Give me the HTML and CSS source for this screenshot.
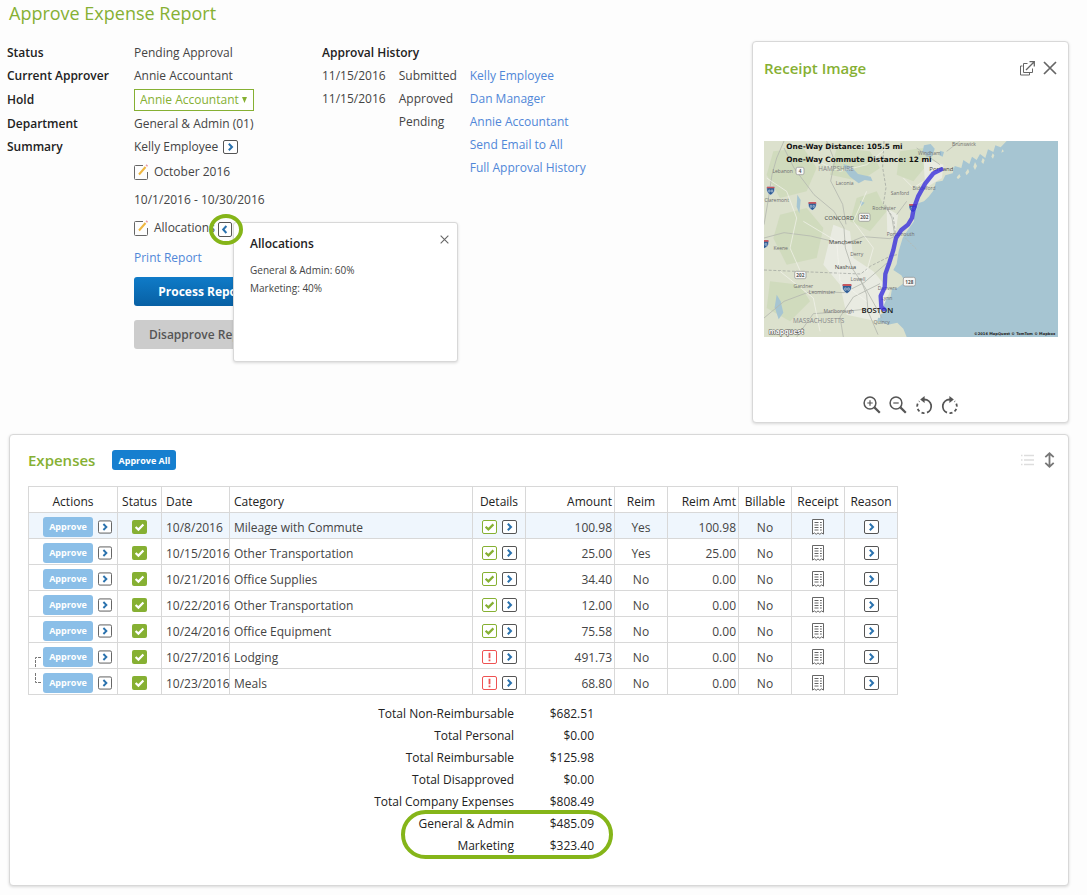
FILE: index.html
```
<!DOCTYPE html>
<html lang="en">
<head>
    <meta charset="UTF-8">
    <meta name="viewport" content="width=device-width, initial-scale=1.0">
    <title>Approve Expense Report</title>
    <link rel="stylesheet" href="styles.css">
</head>
<body>

    <!-- shared icons -->
    <svg class="sprite" width="0" height="0" aria-hidden="true">
        <symbol id="i-next" viewBox="0 0 15 14">
            <rect x="0.5" y="0.5" width="14" height="13" rx="1.5" fill="#fff" stroke="#555"/>
            <path d="M5.8 3.8L9 7l-3.2 3.2" fill="none" stroke="#2a72ae" stroke-width="2"/>
        </symbol>
        <symbol id="i-prev" viewBox="0 0 14 15">
            <rect x="0.5" y="0.5" width="13" height="14" rx="1.5" fill="#fff" stroke="#555"/>
            <path d="M8.4 4L5.2 7.5 8.4 11" fill="none" stroke="#2a72ae" stroke-width="2"/>
        </symbol>
        <symbol id="i-edit" viewBox="0 0 15 16">
            <path d="M9 1.5H1.5a1 1 0 0 0-1 1v12a1 1 0 0 0 1 1h11a1 1 0 0 0 1-1V8" fill="none" stroke="#666"/>
            <path d="M5 10.5L11.5 3" stroke="#eeb640" stroke-width="2"/>
            <path d="M12.3 2.2l1-1.2" stroke="#e79aa4" stroke-width="2"/>
        </symbol>
        <symbol id="i-ok" viewBox="0 0 15 14">
            <rect width="15" height="14" rx="2" fill="#86b033"/>
            <path d="M3.6 7l2.8 2.6 5-5.2" fill="none" stroke="#fff" stroke-width="2.2"/>
        </symbol>
        <symbol id="i-check" viewBox="0 0 15 14">
            <rect x="0.5" y="0.5" width="14" height="13" rx="1.5" fill="#fff" stroke="#86b033"/>
            <path d="M3.6 6.8l2.8 2.6 5-5" fill="none" stroke="#86b033" stroke-width="2.2"/>
        </symbol>
        <symbol id="i-warn" viewBox="0 0 15 14">
            <rect x="0.5" y="0.5" width="14" height="13" rx="1.5" fill="#fff" stroke="#ee5252"/>
            <path d="M7.5 2.8v5.4M7.5 9.4v1.8" stroke="#ee5252" stroke-width="1.8"/>
        </symbol>
        <symbol id="i-receipt" viewBox="0 0 12 16">
            <path d="M0.5 0.5h11v14.6l-1.9-1.2-1.8 1.4L6 13.9l-1.8 1.4-1.8-1.4-1.9 1.2z" fill="#fff" stroke="#666"/>
            <path d="M2.5 3.5h4M8 3.5h1.8M2.5 6h4M8 6h1.8M2.5 8.5h4M8 8.5h1.8M2.5 11h4M8 11h1.8" stroke="#666"/>
        </symbol>
        <symbol id="i-close" viewBox="0 0 14 14">
            <path d="M1 1l12 12M13 1L1 13" fill="none" stroke="#666" stroke-width="1.7"/>
        </symbol>
        <symbol id="i-shield" viewBox="0 0 28 28">
            <path d="M3 2h22c2 10 1 18-11 25C2 20 1 12 3 2z" fill="#2f5d95" stroke="#e8eef2" stroke-width="1.5"/>
            <path d="M3 2h22l1 5H2z" fill="#c8585e"/>
            <path d="M8 12h4v6H8zM16 12h4v6h-4z" fill="none" stroke="#dfe8f0" stroke-width="1.5"/>
        </symbol>
    </svg>

    <main class="page">
        <h1>Approve Expense Report</h1>

        <section class="top">
            <dl class="summary">
                <dt>Status</dt>
                <dd>Pending Approval</dd>
                <dt>Current Approver</dt>
                <dd>Annie Accountant</dd>
                <dt class="hold"><label for="hold">Hold</label></dt>
                <dd class="hold">
                    <span class="select">
                        <select id="hold">
                            <option>Annie Accountant</option>
                        </select>
                        <svg width="5" height="6" viewBox="0 0 5 6"><path d="M0 0h5L2.5 6z" fill="#86b033"/></svg>
                    </span>
                </dd>
                <dt>Department</dt>
                <dd>General &amp; Admin (01)</dd>
                <dt>Summary</dt>
                <dd>Kelly Employee <button class="icon" aria-label="Employee details"><svg width="15" height="14"><use href="#i-next"/></svg></button></dd>
                <dd class="tall"><button class="icon" aria-label="Edit name"><svg width="15" height="16"><use href="#i-edit"/></svg></button>October 2016</dd>
                <dd class="tall">10/1/2016 - 10/30/2016</dd>
                <dd class="tall allocations">
                    <button class="icon" aria-label="Edit allocations"><svg width="15" height="16"><use href="#i-edit"/></svg></button>Allocations
                    <button class="icon ringed" aria-label="Hide allocations"><svg width="14" height="15"><use href="#i-prev"/></svg></button>
                    <div class="popover">
                        <h3>Allocations</h3>
                        <button class="icon" aria-label="Close allocations"><svg width="9" height="9"><use href="#i-close"/></svg></button>
                        <p>General &amp; Admin: 60%</p>
                        <p>Marketing: 40%</p>
                    </div>
                </dd>
                <dd class="print"><a href="#">Print Report</a></dd>
                <dd class="buttons">
                    <button class="btn process">Process Report</button>
                    <button class="btn disapprove">Disapprove Report</button>
                </dd>
            </dl>

            <table class="history">
                <caption>Approval History</caption>
                <tr><td>11/15/2016</td><td>Submitted</td><td><a href="#">Kelly Employee</a></td></tr>
                <tr><td>11/15/2016</td><td>Approved</td><td><a href="#">Dan Manager</a></td></tr>
                <tr><td></td><td>Pending</td><td><a href="#">Annie Accountant</a></td></tr>
                <tr><td></td><td></td><td><a href="#">Send Email to All</a></td></tr>
                <tr><td></td><td></td><td><a href="#">Full Approval History</a></td></tr>
            </table>

            <aside class="panel receipt">
                <header>
                    <h2>Receipt Image</h2>
                    <button class="icon" aria-label="Open in new window">
                        <svg width="15" height="15" viewBox="0 0 15 15" fill="none" stroke="#666">
                            <path d="M7.5 2.5h-4v9h9v-4"/>
                            <path d="M2.5 5H0.5v9h9v-2"/>
                            <path d="M6 9l8-8M9.5 0.7h4.8v4.8" stroke-width="1.3"/>
                        </svg>
                    </button>
                    <button class="icon" aria-label="Close receipt"><svg width="14" height="14"><use href="#i-close"/></svg></button>
                </header>

                <svg class="map" viewBox="12 9 882 588" role="img" aria-label="Route from Portland to Boston">
                    <rect x="12" y="9" width="882" height="588" fill="#a6c5d2"/>
                    <path d="M12 9H740L722 28 706 22 700 42 684 34 676 60 660 48 650 66 636 56 628 78 610 66 604 90 584 84 578 106 556 112 548 128 528 132 520 158 506 176 492 190 468 198 462 226 462 250 446 272 428 300 416 340 410 378 400 396 424 412 436 432 412 450 396 452 392 476 366 490 364 508 378 520 356 534 352 548 384 560 412 554 430 572 440 597H12z" fill="#dce1cd"/>
                    <g fill="#d0dbbd">
                        <path d="M40 40l90-10 40 60-30 70-80 20-40-70z"/>
                        <path d="M230 30l100 10 30 50-60 40-90-20z"/>
                        <path d="M60 230l80-20 50 60-20 90-90 20-40-80z"/>
                        <path d="M290 180l60-20 30 60-50 60-60-30z"/>
                        <path d="M30 430l90 10 30 50-60 60-70-40z"/>
                        <path d="M420 40l70-10 20 40-50 60-50-20z"/>
                    </g>
                    <g fill="#e9ebe2">
                        <path d="M220 260l50 20 10 80 60 40 50 60-40 90-90-20-20-90-50-60z"/>
                        <path d="M380 210l34 20-6 50-26 12z"/>
                        <path d="M490 60l60 20-4 40-50 30z"/>
                        <path d="M300 440l70 10-10 90-60-14z"/>
                    </g>
                    <g fill="#a6c5d2">
                        <path d="M250 78l24 8 20 22 38 8 6 14-24-4-18 10-26-20-14-18z"/>
                        <path d="M492 22l20-4 12 14-6 22-18 4-12-18z"/>
                        <path d="M50 470l12 20 8 34-14 20-12-36z"/>
                        <path d="M112 170l10 16-4 40-8-20z"/>
                        <path d="M540 38l12 4-4 14-10-4z"/>
                        <path d="M300 188l14 6-10 10z"/>
                    </g>
                    <g fill="#dce1cd">
                        <path d="M640 86l5-14 6 12-6 12zM616 104l8-12 4 10-8 10zM664 72l4-12 6 6-4 12zM694 56l4-10 5 6-4 10zM590 118l8-10 4 8-8 8zM724 44l3-10 5 6z"/>
                    </g>
                    <!-- roads and borders -->
                    <g fill="none" stroke="#b4b8b0" stroke-width="2.5">
                        <path d="M72 9L50 60 36 110 24 190 12 260"/>
                        <path d="M72 30l30 60 60 80 60 50 30 50 4 60 20 60 40 60 50 90"/>
                        <path d="M200 9l24 60-12 60 36 70 10 60"/>
                        <path d="M250 320l60-24 80 6 30-16"/>
                        <path d="M12 300l60-16 80 10 100 24"/>
                        <path d="M12 540l60-50 80-30 100 4 60-30 70-60"/>
                        <path d="M110 597l50-70 90-6 70-8"/>
                        <path d="M250 597l-10-60 40-60 80-40"/>
                        <path d="M300 420l20 50 4 50 30 70"/>
                        <path d="M376 200l20 40 8 50M440 190l-30 40M560 40l40-31M470 30l70 50"/>
                        <path d="M436 300l36 36" stroke-dasharray="6 4"/>
                    </g>
                    <g fill="none" stroke="#989d98" stroke-width="2" stroke-dasharray="9 5">
                        <path d="M12 396l140 6 150 6 30-24 60-30 20-4"/>
                        <path d="M372 9l-4 80 10 60-8 50 30 40 6 44"/>
                    </g>
                    <g fill="none" stroke="#f4f4ee" stroke-width="2">
                        <path d="M20 120l60 40 30 80-20 90 40 90M150 60l90 40 80-20 60-50M130 250l100 60 10 120 80 60M60 400l100 80 20 100M320 160l-40 90 60 80-20 70M430 120l30 30 30-20"/>
                    </g>
                    <use href="#i-shield" x="18" y="144" width="28" height="28"/>
                    <use href="#i-shield" x="143" y="190" width="28" height="28"/>
                    <use href="#i-shield" x="0" y="304" width="28" height="28"/>
                    <use href="#i-shield" x="245" y="436" width="32" height="32"/>
                    <use href="#i-shield" x="445" y="196" width="28" height="28"/>
                    <g fill="#f7f7f5" stroke="#8c8c8c" stroke-width="2">
                        <rect x="108" y="88" width="24" height="22" rx="5"/>
                        <rect x="296" y="226" width="34" height="24" rx="5"/>
                        <rect x="104" y="400" width="34" height="22" rx="5"/>
                        <rect x="430" y="418" width="36" height="26" rx="5"/>
                    </g>
                    <g class="route-no">
                        <text x="120" y="105">4</text>
                        <text x="313" y="243">202</text>
                        <text x="121" y="416">202</text>
                        <text x="448" y="437">128</text>
                    </g>
                    <g class="town">
                        <text x="68" y="105">Lebanon</text>
                        <text x="254" y="141">Laconia</text>
                        <text x="50" y="193">Claremont</text>
                        <text x="420" y="171">Sanford</text>
                        <text x="372" y="216">Rochester</text>
                        <text x="492" y="157">Biddeford</text>
                        <text x="508" y="52">Windham</text>
                        <text x="422" y="293">Portsmouth</text>
                        <text x="62" y="335">Keene</text>
                        <text x="290" y="353">Derry</text>
                        <text x="294" y="430">Lowell</text>
                        <text x="130" y="450">Gardner</text>
                        <text x="186" y="469">Leominster</text>
                        <text x="236" y="526">Marlborough</text>
                        <text x="382" y="455">Danvers</text>
                        <text x="380" y="487">Lynn</text>
                        <text x="365" y="557">Quincy</text>
                        <text x="612" y="23">Brunswick</text>
                    </g>
                    <g class="city">
                        <text x="238" y="247">CONCORD</text>
                        <text x="256" y="318">Manchester</text>
                        <text x="256" y="394">Nashua</text>
                        <text x="544" y="100">Portland</text>
                    </g>
                    <g class="state">
                        <text x="228" y="100">HAMPSHIRE</text>
                        <text x="176" y="556">MASSACHUSETTS</text>
                    </g>
                    <text class="boston" x="352" y="524">BOSTON</text>
                    <path d="M544 94L520 106 496 136 474 176 461 212 456 240 444 260 424 276 408 300 400 336 388 374 376 408 374 448 362 474 364 508 372 514" fill="none" stroke="#3a30dc" stroke-opacity="0.8" stroke-width="13" stroke-linejoin="round" stroke-linecap="round"/>
                    <text class="distance" x="79" y="34">One-Way Distance: 105.5 mi</text>
                    <text class="distance" x="79" y="71">One-Way Commute Distance: 12 mi</text>
                    <text class="brand" x="26" y="587">mapquest</text>
                    <text class="credit" x="886" y="591">©2016 MapQuest © TomTom © Mapbox</text>
                </svg>

                <div class="tools">
                    <button class="icon" aria-label="Zoom in">
                        <svg width="18" height="18" viewBox="0 0 18 18" fill="none" stroke="#555">
                            <circle cx="7" cy="7" r="5.9" stroke-width="1.5"/><path d="M11.4 11.4l5.4 5.4" stroke-width="2.2"/><path d="M4.3 7h5.4M7 4.3v5.4" stroke-width="1.2"/>
                        </svg>
                    </button>
                    <button class="icon" aria-label="Zoom out">
                        <svg width="18" height="18" viewBox="0 0 18 18" fill="none" stroke="#555">
                            <circle cx="7" cy="7" r="5.9" stroke-width="1.5"/><path d="M11.4 11.4l5.4 5.4" stroke-width="2.2"/><path d="M4.3 7h5.4" stroke-width="1.2"/>
                        </svg>
                    </button>
                    <button class="icon" aria-label="Rotate left">
                        <svg width="18" height="18" viewBox="0 0 18 18" fill="none" stroke="#555" stroke-width="1.8">
                            <path d="M8 3.5h1.5a6.8 6.8 0 0 1 2.5 13.1"/><path d="M9.5 17.1A6.8 6.8 0 0 1 2.2 10 6.8 6.8 0 0 1 4.5 5.2" stroke-dasharray="3 2.4"/><path d="M9.6 0v7L5.2 3.5z" fill="#555" stroke="none"/>
                        </svg>
                    </button>
                    <button class="icon" aria-label="Rotate right">
                        <svg width="18" height="18" viewBox="0 0 18 18" fill="none" stroke="#555" stroke-width="1.8">
                            <path d="M10 3.5H8.5A6.8 6.8 0 0 0 6 16.6"/><path d="M8.5 17.1a6.8 6.8 0 0 0 7.3-7.1 6.8 6.8 0 0 0-2.3-4.8" stroke-dasharray="3 2.4"/><path d="M8.4 0v7l4.4-3.5z" fill="#555" stroke="none"/>
                        </svg>
                    </button>
                </div>
            </aside>
        </section>

        <section class="panel expenses">
            <header>
                <h2>Expenses</h2>
                <button class="btn approve-all">Approve All</button>
                <button class="icon push" aria-label="List view">
                    <svg width="13" height="12" viewBox="0 0 13 12"><path d="M0 1.5h1.5M3 1.5h10M0 6h1.5M3 6h10M0 10.5h1.5M3 10.5h10" stroke="#ddd" stroke-width="1.3"/></svg>
                </button>
                <button class="icon" aria-label="Expand">
                    <svg width="11" height="16" viewBox="0 0 11 16"><path d="M5.5 2v12M1.3 5.2L5.5 1.3l4.2 3.9M1.3 10.8l4.2 3.9 4.2-3.9" fill="none" stroke="#777" stroke-width="1.8"/></svg>
                </button>
            </header>

            <table class="grid">
                <colgroup>
                    <col class="c-actions"><col class="c-status"><col class="c-date"><col class="c-category"><col class="c-small"><col class="c-amount"><col class="c-small"><col class="c-reim-amt"><col class="c-small"><col class="c-small"><col class="c-small">
                </colgroup>
                <thead>
                    <tr><th>Actions</th><th>Status</th><th class="left">Date</th><th class="left">Category</th><th>Details</th><th class="num">Amount</th><th>Reim</th><th class="num">Reim Amt</th><th>Billable</th><th>Receipt</th><th>Reason</th></tr>
                </thead>
                <tbody>
                    <tr class="selected">
                        <td><div class="actions"><button class="btn approve">Approve</button><button class="icon" aria-label="More actions"><svg width="14" height="14"><use href="#i-next"/></svg></button></div></td>
                        <td><svg width="15" height="14"><use href="#i-ok"/></svg></td>
                        <td class="left">10/8/2016</td><td class="left">Mileage with Commute</td>
                        <td><div class="pair"><svg width="15" height="14"><use href="#i-check"/></svg><button class="icon" aria-label="Details"><svg width="15" height="14"><use href="#i-next"/></svg></button></div></td>
                        <td class="num">100.98</td><td>Yes</td><td class="num">100.98</td><td>No</td>
                        <td><button class="icon" aria-label="Receipt"><svg width="12" height="16"><use href="#i-receipt"/></svg></button></td>
                        <td><button class="icon" aria-label="Reason"><svg width="15" height="14"><use href="#i-next"/></svg></button></td>
                    </tr>
                    <tr>
                        <td><div class="actions"><button class="btn approve">Approve</button><button class="icon" aria-label="More actions"><svg width="14" height="14"><use href="#i-next"/></svg></button></div></td>
                        <td><svg width="15" height="14"><use href="#i-ok"/></svg></td>
                        <td class="left">10/15/2016</td><td class="left">Other Transportation</td>
                        <td><div class="pair"><svg width="15" height="14"><use href="#i-check"/></svg><button class="icon" aria-label="Details"><svg width="15" height="14"><use href="#i-next"/></svg></button></div></td>
                        <td class="num">25.00</td><td>Yes</td><td class="num">25.00</td><td>No</td>
                        <td><button class="icon" aria-label="Receipt"><svg width="12" height="16"><use href="#i-receipt"/></svg></button></td>
                        <td><button class="icon" aria-label="Reason"><svg width="15" height="14"><use href="#i-next"/></svg></button></td>
                    </tr>
                    <tr>
                        <td><div class="actions"><button class="btn approve">Approve</button><button class="icon" aria-label="More actions"><svg width="14" height="14"><use href="#i-next"/></svg></button></div></td>
                        <td><svg width="15" height="14"><use href="#i-ok"/></svg></td>
                        <td class="left">10/21/2016</td><td class="left">Office Supplies</td>
                        <td><div class="pair"><svg width="15" height="14"><use href="#i-check"/></svg><button class="icon" aria-label="Details"><svg width="15" height="14"><use href="#i-next"/></svg></button></div></td>
                        <td class="num">34.40</td><td>No</td><td class="num">0.00</td><td>No</td>
                        <td><button class="icon" aria-label="Receipt"><svg width="12" height="16"><use href="#i-receipt"/></svg></button></td>
                        <td><button class="icon" aria-label="Reason"><svg width="15" height="14"><use href="#i-next"/></svg></button></td>
                    </tr>
                    <tr>
                        <td><div class="actions"><button class="btn approve">Approve</button><button class="icon" aria-label="More actions"><svg width="14" height="14"><use href="#i-next"/></svg></button></div></td>
                        <td><svg width="15" height="14"><use href="#i-ok"/></svg></td>
                        <td class="left">10/22/2016</td><td class="left">Other Transportation</td>
                        <td><div class="pair"><svg width="15" height="14"><use href="#i-check"/></svg><button class="icon" aria-label="Details"><svg width="15" height="14"><use href="#i-next"/></svg></button></div></td>
                        <td class="num">12.00</td><td>No</td><td class="num">0.00</td><td>No</td>
                        <td><button class="icon" aria-label="Receipt"><svg width="12" height="16"><use href="#i-receipt"/></svg></button></td>
                        <td><button class="icon" aria-label="Reason"><svg width="15" height="14"><use href="#i-next"/></svg></button></td>
                    </tr>
                    <tr>
                        <td><div class="actions"><button class="btn approve">Approve</button><button class="icon" aria-label="More actions"><svg width="14" height="14"><use href="#i-next"/></svg></button></div></td>
                        <td><svg width="15" height="14"><use href="#i-ok"/></svg></td>
                        <td class="left">10/24/2016</td><td class="left">Office Equipment</td>
                        <td><div class="pair"><svg width="15" height="14"><use href="#i-check"/></svg><button class="icon" aria-label="Details"><svg width="15" height="14"><use href="#i-next"/></svg></button></div></td>
                        <td class="num">75.58</td><td>No</td><td class="num">0.00</td><td>No</td>
                        <td><button class="icon" aria-label="Receipt"><svg width="12" height="16"><use href="#i-receipt"/></svg></button></td>
                        <td><button class="icon" aria-label="Reason"><svg width="15" height="14"><use href="#i-next"/></svg></button></td>
                    </tr>
                    <tr>
                        <td><div class="actions"><svg class="link" width="6" height="10" viewBox="0 0 6 10"><path d="M6 0.5H0.5V10" fill="none" stroke="#777" stroke-dasharray="3 1"/></svg><button class="btn approve">Approve</button><button class="icon" aria-label="More actions"><svg width="14" height="14"><use href="#i-next"/></svg></button></div></td>
                        <td><svg width="15" height="14"><use href="#i-ok"/></svg></td>
                        <td class="left">10/27/2016</td><td class="left">Lodging</td>
                        <td><div class="pair"><svg width="15" height="14"><use href="#i-warn"/></svg><button class="icon" aria-label="Details"><svg width="15" height="14"><use href="#i-next"/></svg></button></div></td>
                        <td class="num">491.73</td><td>No</td><td class="num">0.00</td><td>No</td>
                        <td><button class="icon" aria-label="Receipt"><svg width="12" height="16"><use href="#i-receipt"/></svg></button></td>
                        <td><button class="icon" aria-label="Reason"><svg width="15" height="14"><use href="#i-next"/></svg></button></td>
                    </tr>
                    <tr>
                        <td><div class="actions"><svg class="link up" width="6" height="10" viewBox="0 0 6 10"><path d="M6 9.5H0.5V0" fill="none" stroke="#777" stroke-dasharray="3 1"/></svg><button class="btn approve">Approve</button><button class="icon" aria-label="More actions"><svg width="14" height="14"><use href="#i-next"/></svg></button></div></td>
                        <td><svg width="15" height="14"><use href="#i-ok"/></svg></td>
                        <td class="left">10/23/2016</td><td class="left">Meals</td>
                        <td><div class="pair"><svg width="15" height="14"><use href="#i-warn"/></svg><button class="icon" aria-label="Details"><svg width="15" height="14"><use href="#i-next"/></svg></button></div></td>
                        <td class="num">68.80</td><td>No</td><td class="num">0.00</td><td>No</td>
                        <td><button class="icon" aria-label="Receipt"><svg width="12" height="16"><use href="#i-receipt"/></svg></button></td>
                        <td><button class="icon" aria-label="Reason"><svg width="15" height="14"><use href="#i-next"/></svg></button></td>
                    </tr>
                </tbody>
            </table>

            <div class="totals">
                <table>
                    <tr><th>Total Non-Reimbursable</th><td>$682.51</td></tr>
                    <tr><th>Total Personal</th><td>$0.00</td></tr>
                    <tr><th>Total Reimbursable</th><td>$125.98</td></tr>
                    <tr><th>Total Disapproved</th><td>$0.00</td></tr>
                    <tr><th>Total Company Expenses</th><td>$808.49</td></tr>
                    <tr><th>General &amp; Admin</th><td>$485.09</td></tr>
                    <tr><th>Marketing</th><td>$323.40</td></tr>
                </table>
            </div>
        </section>
    </main>

</body>
</html>
```
FILE: styles.css
```
*, *::before, *::after {
    box-sizing: border-box;
}
body {
    margin: 0;
    background: #fdfdfd;
    color: #444;
    font-family: 'Open Sans', sans-serif;
    font-size: 12px;
    line-height: 18px;
}
.sprite {
    position: absolute;
}
.page {
    padding: 0 18px 9px 9px;
}
h1, h2, h3, p, dl, dd {
    margin: 0;
}
h1 {
    height: 41px;
    color: #86b033;
    font-size: 18px;
    font-weight: 400;
    line-height: 27px;
}
h2 {
    color: #86b033;
    font-size: 15px;
    font-weight: 600;
    line-height: 20px;
}
a {
    color: #5087d8;
    text-decoration: none;
}
button, select {
    font-family: inherit;
}
svg {
    display: block;
}
.icon {
    display: inline-flex;
    padding: 0;
    border: 0;
    background: none;
    cursor: pointer;
}
.btn {
    border: 0;
    border-radius: 3px;
    cursor: pointer;
}
.panel {
    background: #fff;
    border: 1px solid #d8d8d8;
    border-radius: 4px;
    box-shadow: 0 1px 3px rgba(0, 0, 0, 0.15);
}

/* summary */
.top {
    display: flex;
    align-items: flex-start;
    margin: 0 0 11px -2px;
}
.summary {
    display: grid;
    grid-template-columns: 127px 188px;
}
.summary dt, .summary dd {
    display: flex;
    align-items: center;
    gap: 5px;
    height: 23px;
}
.summary dt {
    grid-column: 1;
    color: #222;
    font-weight: 600;
}
.summary dd {
    grid-column: 2;
}
.summary .hold {
    height: 25px;
}
.summary .tall {
    height: 28px;
}
.summary .print {
    height: 32px;
}
.summary .buttons {
    flex-direction: column;
    align-items: flex-start;
    gap: 14px;
    height: auto;
    padding-top: 3px;
}
.select {
    position: relative;
}
.select select {
    appearance: none;
    width: 120px;
    height: 22px;
    padding: 0 5px;
    border: 1px solid #86b033;
    background: #fff;
    color: #86b033;
    font-size: 12px;
}
.select svg {
    position: absolute;
    right: 7px;
    top: 8px;
}
.process, .disapprove {
    width: 138px;
    height: 29px;
    padding: 0;
    font-size: 12px;
}
.process {
    background: linear-gradient(#0f7bc8, #0860a4);
    color: #fff;
    font-weight: 700;
}
.disapprove {
    background: #ccc;
    color: #555;
    font-weight: 600;
}

/* allocations popover */
.allocations {
    position: relative;
}
.ringed {
    position: absolute;
    left: 84px;
    top: 8px;
    z-index: 2;
}
.ringed::after {
    content: "";
    position: absolute;
    left: -9px;
    top: -8px;
    width: 34px;
    height: 31px;
    border: 4px solid #85b519;
    border-radius: 50%;
}
.popover {
    position: absolute;
    left: 99px;
    top: 8px;
    z-index: 1;
    width: 225px;
    height: 140px;
    padding: 12px 16px;
    background: #fff;
    border: 1px solid #d8d8d8;
    border-radius: 3px;
    box-shadow: 0 1px 3px rgba(0, 0, 0, 0.15);
    font-size: 10px;
}
.popover h3 {
    margin-bottom: 8px;
    color: #222;
    font-size: 12px;
    font-weight: 600;
}
.popover .icon {
    position: absolute;
    right: 8px;
    top: 12px;
}

/* approval history */
.history {
    border-collapse: collapse;
}
.history caption {
    height: 23px;
    color: #222;
    font-weight: 600;
    line-height: 23px;
    text-align: left;
}
.history td {
    height: 23px;
    padding: 0 13px 0 0;
    white-space: nowrap;
}

/* receipt */
.receipt {
    display: flex;
    flex-direction: column;
    width: 317px;
    height: 382px;
    margin-left: auto;
    padding: 16px 10px 8px 11px;
}
.receipt header {
    display: flex;
    align-items: center;
    gap: 8px;
    margin-bottom: 4px;
    padding-right: 1px;
}
.receipt h2 {
    flex: 1;
}
.map {
    width: 100%;
    margin: auto 0;
}
.tools {
    display: flex;
    justify-content: center;
    gap: 8px;
}
.map text {
    text-anchor: middle;
}
.map .town {
    fill: #6e6e6e;
    font-size: 15px;
}
.map .route-no {
    fill: #555;
    font-size: 14px;
    font-weight: 700;
}
.map .city {
    fill: #444;
    font-size: 18px;
}
.map .state {
    fill: #858588;
    font-size: 19px;
}
.map .boston {
    fill: #111;
    font-size: 23px;
    font-weight: 600;
}
.map .distance {
    fill: #111;
    font-family: 'DejaVu Sans', sans-serif;
    font-size: 22px;
    font-weight: 700;
    text-anchor: start;
}
.map .brand {
    fill: #fff;
    stroke: #555;
    stroke-width: 3px;
    paint-order: stroke;
    font-size: 21px;
    font-weight: 700;
    text-anchor: start;
}
.map .credit {
    fill: #222;
    font-family: 'DejaVu Sans', sans-serif;
    font-size: 11px;
    font-weight: 700;
    text-anchor: end;
}

/* expenses */
.expenses {
    padding: 15px 13px 28px 18px;
}
.expenses header {
    display: flex;
    align-items: center;
    gap: 10px;
    height: 20px;
    margin-bottom: 16px;
}
.approve-all {
    width: 64px;
    height: 20px;
    margin-left: 7px;
    padding: 0;
    background: #167fcf;
    color: #fff;
    font-size: 9px;
    font-weight: 700;
}
.push {
    margin-left: auto;
}
.grid {
    width: 870px;
    border-collapse: collapse;
    table-layout: fixed;
}
.c-actions, .c-amount {
    width: 89px;
}
.c-status {
    width: 44px;
}
.c-date {
    width: 68px;
}
.c-small {
    width: 53px;
}
.c-reim-amt {
    width: 71px;
}
.grid th, .grid td {
    height: 26px;
    padding: 4px 2px 0;
    border: 1px solid #d8d8d8;
    text-align: center;
    white-space: nowrap;
}
.grid td:has(svg) {
    padding-top: 2px;
}
.grid th {
    color: #222;
    font-weight: 400;
}
.grid .left {
    padding-left: 4px;
    padding-right: 0;
    text-align: left;
}
.grid .num {
    text-align: right;
}
.grid svg {
    margin: 0 auto;
}
.grid .icon {
    vertical-align: middle;
}
.selected {
    background: #eff6fd;
}
.actions, .pair {
    display: flex;
    align-items: center;
    justify-content: flex-end;
    gap: 5px;
}
.actions {
    position: relative;
    padding-right: 3px;
}
.pair {
    justify-content: center;
}
.pair svg {
    margin: 0;
}
.approve {
    width: 50px;
    height: 20px;
    padding: 0;
    background: #8bbfe8;
    color: #fff;
    font-size: 9px;
    font-weight: 700;
}
.link {
    position: absolute;
    left: 4px;
    bottom: 0;
}
.link.up {
    bottom: auto;
    top: 0;
}
.totals {
    position: relative;
    margin-top: 8px;
}
.totals::after {
    content: "";
    position: absolute;
    left: 373px;
    bottom: -2px;
    width: 212px;
    height: 49px;
    border: 4px solid #85b519;
    border-radius: 25px;
}
.totals table {
    border-collapse: collapse;
    color: #222;
}
.totals th, .totals td {
    height: 22px;
    padding: 0;
    font-weight: 400;
    text-align: right;
}
.totals th {
    width: 486px;
}
.totals td {
    width: 80px;
}
```
